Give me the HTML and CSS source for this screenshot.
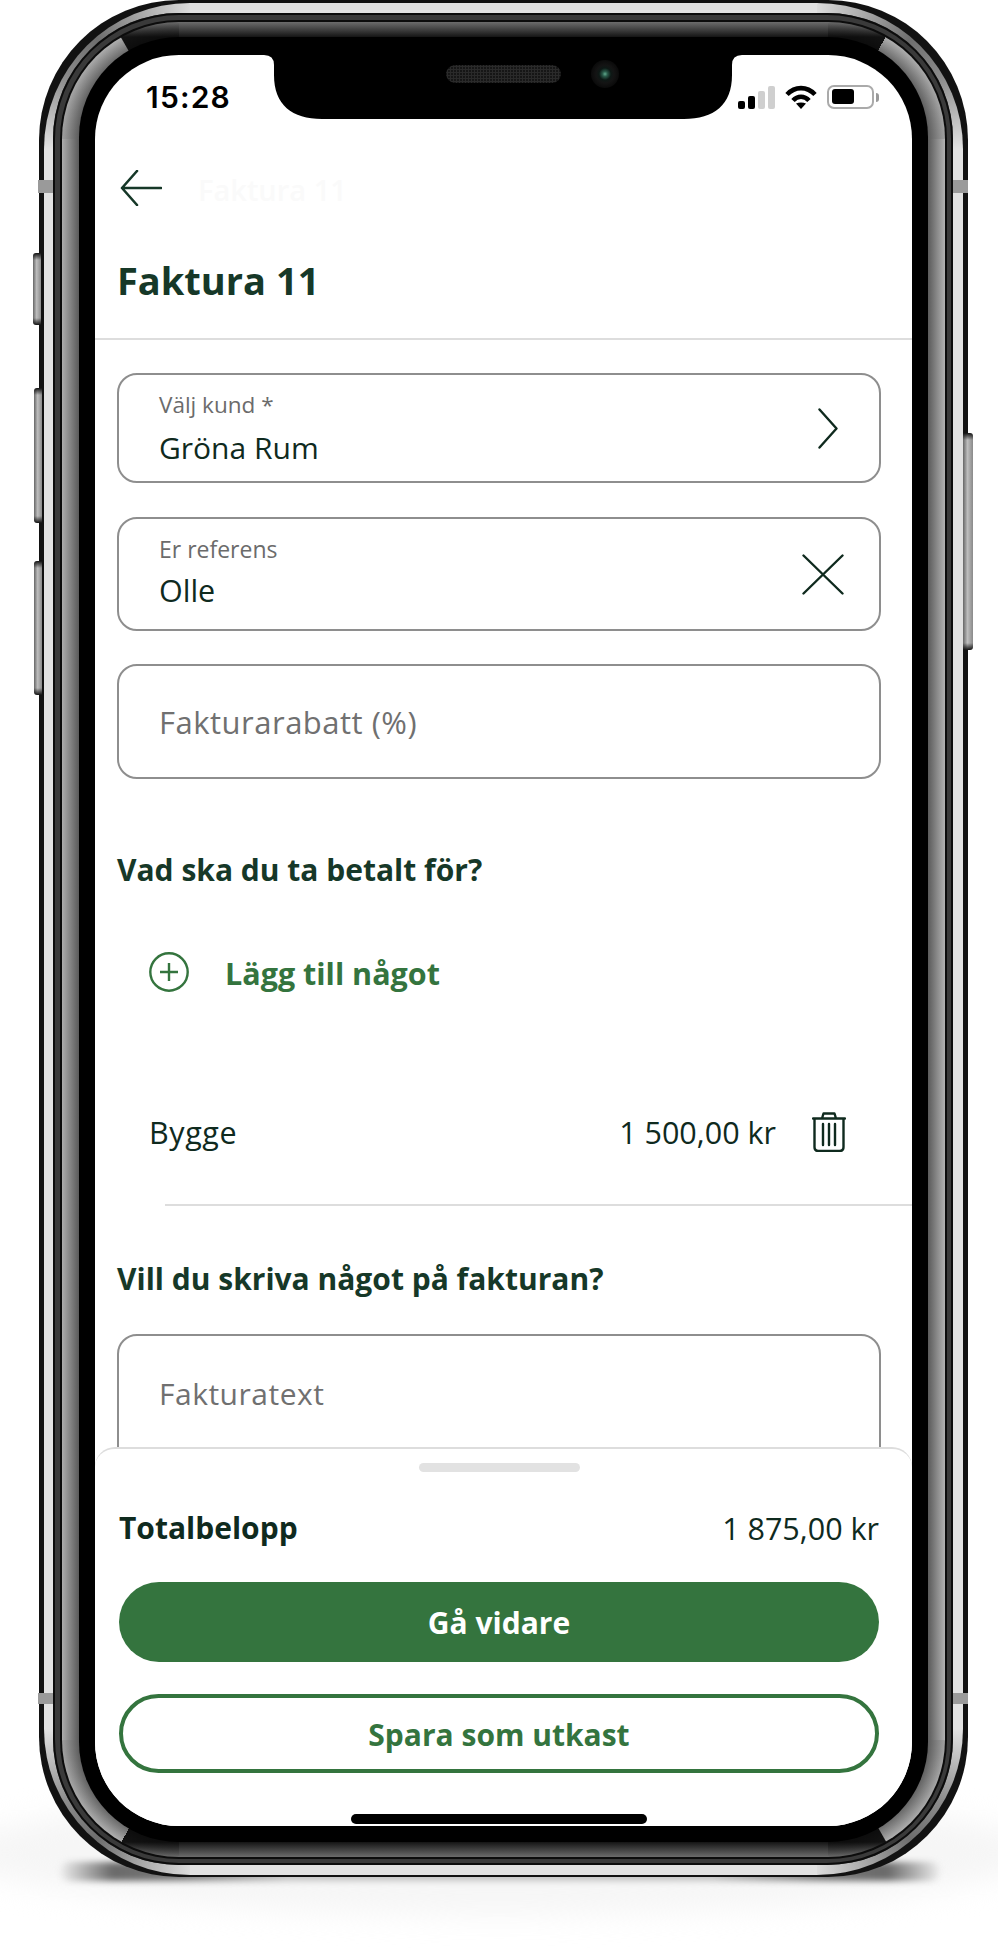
FILE: index.html
```html
<!DOCTYPE html>
<html lang="sv">
<head>
<meta charset="utf-8">
<title>Faktura 11</title>
<link rel="stylesheet" href="styles.css">
</head>
<body>
<div class="stage">
  <div class="shadow-soft"></div>
  <div class="shadow-hard"></div>
  <div class="phone">
    <div class="rim-light">
      <div class="rim-dark">
        <div class="rim-steel">
          <div class="bezel">
            <div class="screen">
              <div class="notch">
                <svg class="notch-shape" viewBox="0 0 478 64" width="478" height="64"><path d="M0 0H478Q468 0 468 10V20C468 50 450 64 420 64H58C28 64 10 50 10 20V10Q10 0 0 0Z"/></svg>
                <div class="speaker"></div>
                <div class="camera"></div>
              </div>
              <div class="status">
                <span class="time">15:28</span>
                <div class="status-icons">
                  <div class="signal">
                    <i class="bar b1"></i><i class="bar b2"></i><i class="bar b3"></i><i class="bar b4"></i>
                  </div>
                  <svg class="wifi" viewBox="0 0 32 24" width="32" height="24"><path d="M2 9.500C10 1 22 1 30 9.500" fill="none" stroke="#000" stroke-width="4.600"/><path d="M8 15.500C12.500 10.500 19.500 10.500 24 15.500" fill="none" stroke="#000" stroke-width="4.600"/><path d="M11 18.500C14 17 18 17 21 18.500L16 24Z" fill="#000"/></svg>
                  <div class="battery"><div class="battery-fill"></div></div>
                  <div class="battery-tip"></div>
                </div>
              </div>
              <div class="nav">
                <svg class="ic-back" viewBox="0 0 42 36" width="42" height="36"><path d="M41 18H2M17 1L2 18L17 35" fill="none" stroke="#163828" stroke-width="2.600" stroke-linecap="round" stroke-linejoin="round"/></svg>
                <span class="ghost">Faktura 11</span>
              </div>
              <h1 class="title">Faktura 11</h1>
              <div class="rule"></div>
              <div class="form">
                <div class="field f1">
                  <div class="field-text">
                    <span class="label">Välj kund *</span>
                    <span class="value">Gröna Rum</span>
                  </div>
                  <svg class="ic-chevron" viewBox="0 0 20 41" width="20" height="41"><path d="M1.500 1.500L18.500 20.500L1.500 39.500" fill="none" stroke="#0f2a1e" stroke-width="2.400" stroke-linecap="round" stroke-linejoin="round"/></svg>
                </div>
                <div class="field f2">
                  <div class="field-text">
                    <span class="label">Er referens</span>
                    <span class="value">Olle</span>
                  </div>
                  <svg class="ic-close" viewBox="0 0 42 41" width="42" height="41"><path d="M1.500 1.500L40.500 39.500M40.500 1.500L1.500 39.500" fill="none" stroke="#0f2a1e" stroke-width="2.400" stroke-linecap="round"/></svg>
                </div>
                <div class="field f3"><span class="placeholder">Fakturarabatt (%)</span></div>
                <h2 class="section s1">Vad ska du ta betalt för?</h2>
                <div class="add-row">
                  <svg class="ic-plus" viewBox="0 0 40 40" width="40" height="40"><circle cx="20" cy="20" r="18.700" fill="none" stroke="#34743e" stroke-width="2.400"/><path d="M20 11V29M11 20H29" fill="none" stroke="#34743e" stroke-width="2.400"/></svg>
                  <span class="add-text">Lägg till något</span>
                </div>
                <div class="item-row">
                  <span class="item-name">Bygge</span>
                  <div class="item-right">
                    <span class="item-price">1 500,00 kr</span>
                    <svg class="ic-trash" viewBox="0 0 34 40" width="34" height="40"><path d="M1 6.500H33M10 6.500L11.500 1.500H22.500L24 6.500M2.500 6.500V35C2.500 37.500 4 39 6.500 39H27.500C30 39 31.500 37.500 31.500 35V6.500M11 12V33M17 12V33M23 12V33" fill="none" stroke="#0f2a1e" stroke-width="2.400" stroke-linecap="round" stroke-linejoin="round"/></svg>
                  </div>
                </div>
                <div class="item-rule"></div>
                <h2 class="section s2">Vill du skriva något på fakturan?</h2>
                <div class="field f4"><span class="placeholder p-text">Fakturatext</span></div>
              </div>
              <div class="sheet">
                <div class="handle"></div>
                <div class="total-row">
                  <span class="total-label">Totalbelopp</span>
                  <span class="total-value">1 875,00 kr</span>
                </div>
                <button class="btn btn-primary">Gå vidare</button>
                <button class="btn btn-outline">Spara som utkast</button>
                <div class="home"></div>
              </div>
            </div>
          </div>
        </div>
      </div>
    </div>
    <span class="antenna a-tl"></span><span class="antenna a-tr"></span>
    <span class="antenna a-bl"></span><span class="antenna a-br"></span>
  </div>
  <span class="key k-silent"></span>
  <span class="key k-up"></span>
  <span class="key k-down"></span>
  <span class="key k-power"></span>
</div>
</body>
</html>
```
FILE: styles.css
```css
* { box-sizing: border-box; }
html, body { margin: 0; padding: 0; background: #fff; }
body { font-family: "Open Sans", "Liberation Sans", sans-serif; color: #0f2a1e; }

.stage { position: relative; width: 998px; height: 1948px; padding-left: 39px; overflow: hidden; }

.shadow-soft {
  position: absolute; left: -40px; top: 1790px; width: 1078px; height: 125px;
  border-radius: 50%; background: #f6f6f6; filter: blur(14px);
}
.shadow-hard {
  position: absolute; left: 60px; top: 1862px; width: 880px; height: 19px; border-radius: 10px;
  background: linear-gradient(to right, #eee, #6a6a6a 6%, #777 13%, #c4c4c4 26%, #c4c4c4 74%, #777 87%, #6a6a6a 94%, #eee);
  filter: blur(3px);
}

.phone {
  position: relative; width: 929px; height: 1877px; padding: 3px 5px 2px 5px;
  border-radius: 140px; background: #121212;
}
.rim-light {
  height: 100%; padding: 10px 10px 10px 9px; border-radius: 146px; background-color: #e2e2e2;
  background-image:
    conic-gradient(from 270deg at 100% 100%, #e2e2e2, #8c8c8c 30deg, #6e6e6e 50deg, #a8a8a8 70deg, #dcdcdc 90deg, transparent 0),
    conic-gradient(from 0deg at 0 100%, #dcdcdc, #a8a8a8 20deg, #6e6e6e 40deg, #8c8c8c 60deg, #e2e2e2 90deg, transparent 0),
    conic-gradient(from 90deg at 0 0, #e2e2e2, #8c8c8c 30deg, #6e6e6e 50deg, #a8a8a8 70deg, #dcdcdc 90deg, transparent 0),
    conic-gradient(from 180deg at 100% 0, #dcdcdc, #a8a8a8 20deg, #6e6e6e 40deg, #8c8c8c 60deg, #e2e2e2 90deg, transparent 0);
  background-repeat: no-repeat;
  background-size: 146px 146px;
  background-position: 0 0, 100% 0, 100% 100%, 0 100%;
}
.rim-dark {
  height: 100%; padding: 9px 8px 8px 9px; border-radius: 126px; background: #3a3a3a;
  box-shadow: inset 0 0 0 2px #0c0c0c;
}
.rim-steel {
  height: 100%; padding: 15px 17px 15px 17px; border-radius: 117px; background-color: #141414;
  box-shadow: 0 0 0 2px #0c0c0c;
  background-image:
    radial-gradient(circle 117px at 100% 100%, rgba(0,0,0,.45) 99px, rgba(0,0,0,0) 117px),
    radial-gradient(circle 117px at 0 100%, rgba(0,0,0,.45) 99px, rgba(0,0,0,0) 117px),
    radial-gradient(circle 117px at 0 0, rgba(0,0,0,.45) 99px, rgba(0,0,0,0) 117px),
    radial-gradient(circle 117px at 100% 0, rgba(0,0,0,.45) 99px, rgba(0,0,0,0) 117px),
    conic-gradient(from 270deg at 100% 100%, #a0a0a0, #b0b0b0 60deg, transparent 60.500deg),
    conic-gradient(from 29.500deg at 0 100%, #b0b0b0, #a0a0a0 60.500deg, transparent 0),
    conic-gradient(from 90deg at 0 0, #a0a0a0, #b0b0b0 60deg, transparent 60.500deg),
    conic-gradient(from 209.500deg at 100% 0, #b0b0b0, #a0a0a0 60.500deg, transparent 0),
    linear-gradient(to right, #adadad, #5a5a5a),
    linear-gradient(to left, #b2b2b2, #5a5a5a),
    linear-gradient(to bottom, #6c6c6c, #141414 15px, #141414),
    linear-gradient(to top, #6c6c6c, #141414 15px, #141414);
  background-repeat: no-repeat;
  background-size:
    117px 117px, 117px 117px, 117px 117px, 117px 117px,
    117px 117px, 117px 117px, 117px 117px, 117px 117px,
    17px calc(100% - 234px), 17px calc(100% - 234px),
    100% 40px, 100% 40px;
  background-position:
    0 0, 100% 0, 100% 100%, 0 100%,
    0 0, 100% 0, 100% 100%, 0 100%,
    0 50%, 100% 50%, 50% 0, 50% 100%;
}
.bezel {
  height: 100%; padding: 18px 16px 16px 16px; border-radius: 100px; background: #000;
}
.screen {
  position: relative; height: 100%; border-radius: 84px; background: #fff; overflow: hidden;
}

.antenna { position: absolute; width: 15px; background: #9a9a9a; }
.a-tl { left: -1px; top: 180px; height: 13px; }
.a-tr { right: 0; top: 180px; height: 13px; }
.a-bl { left: -1px; top: 1693px; height: 11px; }
.a-br { right: 0; top: 1693px; height: 11px; }

.key {
  position: absolute; width: 8px; border-radius: 3px 0 0 3px;
  background-image:
    linear-gradient(to bottom, #111, rgba(0,0,0,0) 7px, rgba(0,0,0,0) calc(100% - 7px), #111),
    linear-gradient(to right, #666, #bdbdbd 45%, #8a8a8a);
}
.k-silent { left: 33px; top: 253px; height: 72px; }
.k-up { left: 34px; top: 388px; height: 135px; }
.k-down { left: 34px; top: 561px; height: 134px; }
.k-power { left: 963px; top: 433px; height: 217px; width: 10px; border-radius: 0 3px 3px 0; }

.notch { position: absolute; left: 169px; top: 0; width: 478px; height: 64px; }
.notch-shape { display: block; fill: #000; }
.speaker {
  position: absolute; left: 182px; top: 10px; width: 115px; height: 18px; border-radius: 9px;
  background: #161616 radial-gradient(circle, #2a2a2a 1px, transparent 1.2px) 0 0 / 3px 3px;
}
.camera {
  position: absolute; left: 327px; top: 5px; width: 28px; height: 28px; border-radius: 50%;
  background: radial-gradient(circle, #5fa98c 0, #2a5a4a 2.500px, #0d1815 6px, #141414 9px, #0a0a0a 14px);
}

.status {
  display: flex; justify-content: space-between; align-items: center;
  height: 54px; padding: 30px 33px 0 51px;
}
.time { font-family: Inter, "Liberation Sans", sans-serif; font-weight: 600; font-size: 30px; line-height: 24px; letter-spacing: 1.200px; color: #000; }
.status-icons { display: flex; align-items: center; }
.signal { display: flex; align-items: flex-end; gap: 3px; height: 24px; margin-right: 10px; }
.bar { display: block; width: 7px; border-radius: 2px; background: #000; }
.b1 { height: 8px; }
.b2 { height: 13px; }
.b3 { height: 18px; background: #cfcfcf; }
.b4 { height: 23px; background: #cfcfcf; }
.wifi { display: block; margin-right: 10px; }
.battery { width: 47px; height: 24px; padding: 2px 18px 3px 3px; border: 2px solid #aaa; border-radius: 7px; }
.battery-fill { height: 100%; border-radius: 3px; background: #000; }
.battery-tip { width: 3px; height: 9px; margin-left: 2px; border-radius: 0 3px 3px 0; background: #999; }

.nav { display: flex; align-items: center; gap: 36px; height: 36px; margin-top: 61px; padding-left: 25px; }
.ic-back { display: block; }
.ghost { margin-top: 3px; font-size: 29px; font-weight: 600; line-height: 36px; color: #fafafa; }

.title { margin: 49px 0 0; padding-left: 22px; font-size: 38px; font-weight: 700; line-height: 50px; color: #163828; }
.rule { height: 2px; margin-top: 33px; background: #ddd; }

.form { padding: 33px 31px 0 22px; }
.field {
  display: flex; align-items: center; justify-content: space-between;
  padding: 0 41px 0 40px; border: 2px solid #8e8e8e; border-radius: 20px;
}
.f1 { height: 110px; }
.f2 { height: 114px; margin-top: 34px; padding-right: 35px; }
.f3 { height: 115px; margin-top: 33px; }
.f4 { height: 170px; margin-top: 35px; padding-top: 39px; align-items: flex-start; }
.field-text { display: flex; flex-direction: column; }
.f2 .field-text { padding-bottom: 5px; }
.label { font-size: 22.500px; line-height: 30px; color: #6b6b6b; }
.f2 .label { font-size: 23px; }
.value { margin-top: 9px; font-size: 30px; line-height: 38px; color: #0f2a1e; }
.f2 .value { margin-top: 7px; font-size: 30.500px; }
.placeholder { font-size: 31px; line-height: 38px; letter-spacing: .5px; color: #707070; }
.p-text { font-size: 30px; }

.section { margin: 0; font-size: 30px; font-weight: 700; line-height: 40px; color: #163828; }
.s1 { margin-top: 71px; }
.s2 { margin-top: 53px; }

.add-row { display: flex; align-items: center; gap: 36px; height: 40px; margin-top: 62px; padding-left: 32px; }
.ic-plus { display: block; }
.add-text { margin-top: 2px; font-size: 30.500px; font-weight: 700; line-height: 40px; color: #34743e; }

.item-row { display: flex; align-items: center; justify-content: space-between; height: 40px; margin-top: 120px; padding: 0 35px 0 32px; }
.item-name, .item-price { font-size: 30.500px; line-height: 40px; color: #0f2a1e; }
.item-name { letter-spacing: .6px; }
.item-right { display: flex; align-items: center; gap: 36px; }
.ic-trash { display: block; }
.item-rule { height: 2px; margin: 52px -31px 0 48px; background: #ddd; }

.sheet {
  position: absolute; left: 0; right: 0; bottom: 0; height: 379px;
  padding: 14px 33px 0 24px; border-top: 2px solid #ddd; border-radius: 20px 20px 0 0; background: #fff;
}
.handle { width: 161px; height: 9px; margin: 0 auto; border-radius: 5px; background: #e2e2e2; }
.total-row { display: flex; justify-content: space-between; align-items: center; height: 40px; margin-top: 36px; }
.total-label { font-size: 30px; font-weight: 700; line-height: 40px; color: #0f2a1e; }
.total-value { font-size: 30.500px; line-height: 40px; color: #0f2a1e; }
.btn {
  display: block; width: 100%; margin: 0; padding: 2px 0 0; border-radius: 40px;
  font-family: inherit; font-size: 30px; font-weight: 700; line-height: 40px; text-align: center;
}
.btn-primary { height: 80px; margin-top: 34px; border: 0; background: #34743e; color: #fff; }
.btn-outline { height: 79px; margin-top: 32px; border: 4px solid #34743e; background: #fff; color: #34743e; }
.home { width: 296px; height: 10px; margin: 41px auto 0; border-radius: 5px; background: #000; }
```
